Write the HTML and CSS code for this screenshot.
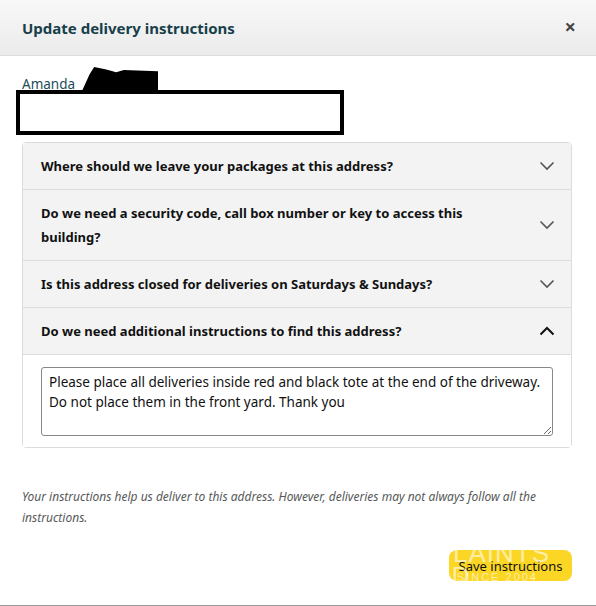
FILE: index.html
```html
<!DOCTYPE html>
<html>
<head>
<meta charset="utf-8">
<link rel="stylesheet" href="styles.css">
</head>
<body>
<div class="modal">
  <div class="header">
    <h1 class="title">Update delivery instructions</h1>
    <span class="close">×</span>
  </div>
  <div class="body">
    <div class="name-row">
      <span class="name">Amanda</span>
      <span class="scribble"></span>
    </div>
    <div class="redact"></div>
    <div class="accordion">
      <div class="row">
        <span class="q">Where should we leave your packages at this address?</span>
        <svg class="chev" width="16" height="10" viewBox="0 0 16 10"><path d="M1.5 1.5 L8 8 L14.5 1.5" fill="none" stroke="#555" stroke-width="1.6"/></svg>
      </div>
      <div class="row tall">
        <span class="q">Do we need a security code, call box number or key to access this building?</span>
        <svg class="chev" width="16" height="10" viewBox="0 0 16 10"><path d="M1.5 1.5 L8 8 L14.5 1.5" fill="none" stroke="#555" stroke-width="1.6"/></svg>
      </div>
      <div class="row">
        <span class="q">Is this address closed for deliveries on Saturdays &amp; Sundays?</span>
        <svg class="chev" width="16" height="10" viewBox="0 0 16 10"><path d="M1.5 1.5 L8 8 L14.5 1.5" fill="none" stroke="#555" stroke-width="1.6"/></svg>
      </div>
      <div class="row">
        <span class="q">Do we need additional instructions to find this address?</span>
        <svg class="chev" width="16" height="10" viewBox="0 0 16 10"><path d="M1.5 8.5 L8 2 L14.5 8.5" fill="none" stroke="#111" stroke-width="2"/></svg>
      </div>
      <div class="panel">
        <textarea class="ta">Please place all deliveries inside red and black tote at the end of the driveway. Do not place them in the front yard. Thank you</textarea>
      </div>
    </div>
    <p class="note">Your instructions help us deliver to this address. However, deliveries may not always follow all the instructions.</p>
    <div class="actions">
      <button class="save">Save instructions</button>
      <span class="wm wm1">LAINTS</span>
      <span class="wm wm2">D</span>
      <span class="wm wm3">SINCE 2004</span>
    </div>
  </div>
</div>
</body>
</html>
```
FILE: styles.css
```css
html, body {
  margin: 0;
  padding: 0;
  background: #fff;
}
body {
  font-family: "Noto Sans", "Open Sans", sans-serif;
  color: #0f1111;
}
.modal {
  width: 596px;
  height: 606px;
  box-sizing: border-box;
  background: #fff;
  border-bottom: 1px solid #999;
  display: flex;
  flex-direction: column;
}
.header {
  height: 56px;
  box-sizing: border-box;
  padding: 0 20px 0 22px;
  display: flex;
  align-items: center;
  justify-content: space-between;
  background: linear-gradient(#f8f8f8, #ebebeb);
  border-bottom: 1px solid #dcdcdc;
}
.title {
  margin: 0;
  font-size: 15px;
  font-weight: 700;
  color: #17404a;
}
.close {
  font-size: 20px;
  color: #444;
  line-height: 1;
  font-weight: 700;
  margin-top: -2px;
}
.body {
  padding: 17px 24px 0 22px;
  display: flex;
  flex-direction: column;
}
.name-row {
  position: relative;
  height: 17px;
  display: flex;
  align-items: flex-end;
}
.name {
  font-size: 13.5px;
  color: #1b4d57;
  line-height: 17px;
  position: relative;
  top: 3px;
}
.scribble {
  position: absolute;
  left: 60px;
  top: -6px;
  width: 76px;
  height: 24px;
  background: #000;
  clip-path: polygon(0 100%, 10% 30%, 16% 0, 32% 10%, 45% 22%, 55% 12%, 100% 18%, 100% 100%);
}
.redact {
  margin-left: -6px;
  width: 328px;
  height: 45px;
  box-sizing: border-box;
  border: 4px solid #000;
  background: #fff;
  position: relative;
}
.accordion {
  margin-top: 7px;
  border: 1px solid #dcdcdc;
  border-radius: 4px;
}
.row {
  height: 47px;
  box-sizing: border-box;
  padding: 0 16px 0 18px;
  display: flex;
  align-items: center;
  justify-content: space-between;
  background: #f3f3f3;
  border-bottom: 1px solid #dcdcdc;
}
.row.tall {
  height: 71px;
}
.q {
  font-size: 13px;
  font-weight: 700;
  line-height: 24px;
  color: #111;
  max-width: 450px;
}
.panel {
  padding: 12px 18px 11px 18px;
  background: #fff;
}
.ta {
  display: block;
  width: 100%;
  height: 69px;
  box-sizing: border-box;
  border: 1px solid #888;
  border-radius: 3px;
  padding: 4px 7px;
  font-family: "Noto Sans", "Open Sans", sans-serif;
  font-size: 13.5px;
  line-height: 20px;
  color: #111;
  resize: vertical;
}
.note {
  margin: 38px 0 0 0;
  font-size: 12px;
  font-style: italic;
  line-height: 21px;
  color: #565959;
}
.actions {
  position: relative;
  margin-top: 22px;
  display: flex;
  justify-content: flex-end;
}
.save {
  width: 123px;
  height: 31px;
  border: none;
  border-radius: 8px;
  background: #fcd625;
  font-family: "Noto Sans", "Open Sans", sans-serif;
  font-size: 13px;
  color: #111;
  padding: 0;
}
.wm {
  position: absolute;
  color: rgba(255, 255, 255, 0.6);
  font-family: "Liberation Sans", sans-serif;
  pointer-events: none;
}
.wm1 {
  right: 22px;
  top: -12px;
  font-size: 26px;
  letter-spacing: 1px;
}
.wm2 {
  right: 103px;
  top: 12px;
  font-size: 24px;
}
.wm3 {
  right: 34px;
  top: 21px;
  font-size: 11px;
  letter-spacing: 2px;
}
```
